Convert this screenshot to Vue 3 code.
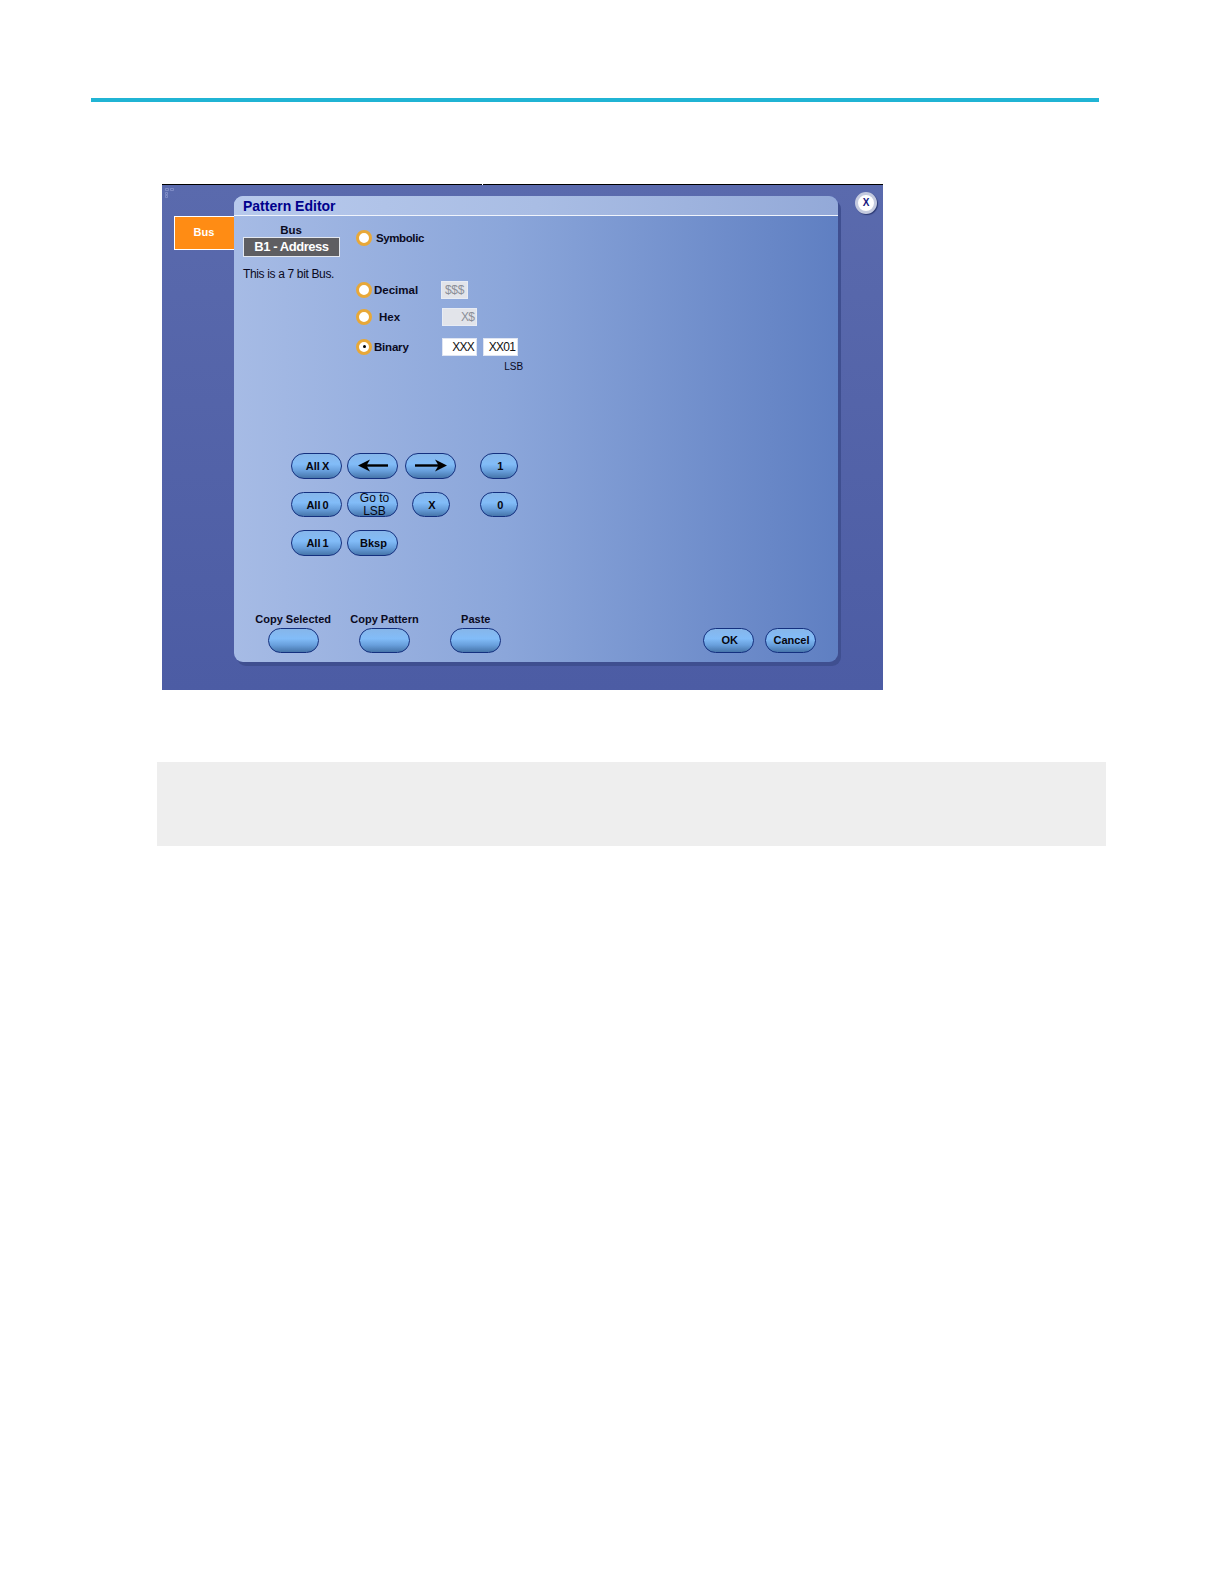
<script setup>
const keypad = [
  { label: 'All X' },
  { icon: 'left' },
  { icon: 'right' },
  { label: '1', narrow: true },
  { label: 'All 0' },
  { label: 'Go to LSB', tight: true },
  { label: 'X', narrow: true, inset: true },
  { label: '0', narrow: true },
  { label: 'All 1' },
  { label: 'Bksp' },
]
const clipboard = ['Copy Selected', 'Copy Pattern', 'Paste']
</script>

<template>
  <div class="page">
    <div class="rule"></div>

    <section class="shot">
      <i class="tick"></i>
      <svg class="grip" width="9" height="10" viewBox="0 0 9 10">
        <path d="M.5.5h3v2h-3zM5.5.5h3v2h-3zM.5 4.5h2v2h-2zM.5 7.5h2v2h-2z" fill="none" stroke="#8d9ad0" stroke-width=".7" />
      </svg>
      <div class="tab">Bus</div>

      <div class="dialog">
        <header class="title">Pattern Editor</header>
        <div class="body">
          <div class="top">
            <div class="bus">
              <div class="bus-label">Bus</div>
              <div class="bus-value">B1 - Address</div>
              <p class="bus-note">This is a 7 bit Bus.</p>
            </div>
            <div class="options">
              <div class="opt">
                <span class="radio"></span>
                <span class="opt-label l-symbolic">Symbolic</span>
              </div>
              <div class="opt decimal">
                <span class="radio"></span>
                <span class="opt-label l-decimal">Decimal</span>
                <span class="field off dec-field">$$$</span>
              </div>
              <div class="opt hex">
                <span class="radio"></span>
                <span class="opt-label l-hex">Hex</span>
                <span class="field off">X$</span>
              </div>
              <div class="opt binary">
                <span class="radio on"></span>
                <span class="opt-label l-binary">Binary</span>
                <span class="field">XXX</span>
                <span class="field">XX01</span>
              </div>
              <div class="lsb">LSB</div>
            </div>
          </div>

          <div class="keypad">
            <button
              v-for="(k, i) in keypad"
              :key="i"
              class="pill"
              :class="{ narrow: k.narrow, inset: k.inset, tight: k.tight, arrow: k.icon }"
            >
              <svg v-if="k.icon === 'left'" width="30" height="13" viewBox="0 0 30 13">
                <path d="M6 6.5H30" stroke="#000" stroke-width="2.4" />
                <path d="M0 6.5 12 .5 8.5 6.5 12 12.5z" fill="#000" />
              </svg>
              <svg v-else-if="k.icon === 'right'" width="32" height="13" viewBox="0 0 32 13">
                <path d="M0 6.5H26" stroke="#000" stroke-width="2.4" />
                <path d="M32 6.5 20 .5 23.5 6.5 20 12.5z" fill="#000" />
              </svg>
              <template v-else>{{ k.label }}</template>
            </button>
          </div>

          <div class="bottom">
            <div v-for="c in clipboard" :key="c" class="clip">
              <span class="clip-label">{{ c }}</span>
              <button class="pill"></button>
            </div>
            <div class="actions">
              <button class="pill">OK</button>
              <button class="pill">Cancel</button>
            </div>
          </div>
        </div>
      </div>

      <button class="close">X</button>
    </section>

    <div class="note"></div>
  </div>
</template>

<style>
html, body { margin: 0; background: #fff; }
</style>

<style scoped>
.page {
  width: 1224px;
  height: 1584px;
  background: #fff;
  overflow: hidden;
  font-family: "Liberation Sans", Arial, sans-serif;
  display: flow-root;
}
.rule {
  width: 1008px;
  height: 4px;
  margin: 98px 0 0 91px;
  background: #20b4d4;
}
.shot {
  position: relative;
  box-sizing: border-box;
  display: flex;
  align-items: flex-start;
  width: 721px;
  height: 506px;
  margin: 82px 0 0 162px;
  padding: 11px 0 0 12px;
  border-top: 1px solid #000;
  background: linear-gradient(180deg, #5a6aad 0%, #4c5ca4 100%);
}
.tick {
  position: absolute;
  left: 320px;
  top: -1px;
  width: 1px;
  height: 1px;
  background: #fff;
}
.grip {
  position: absolute;
  left: 3px;
  top: 3px;
}
.tab {
  box-sizing: border-box;
  width: 60px;
  height: 34px;
  margin-top: 20px;
  padding-right: 1px;
  border: 1px solid #fff;
  border-right: 0;
  background: #ff8c14;
  color: #fff;
  font-size: 11px;
  font-weight: 700;
  line-height: 30px;
  text-align: center;
}
.dialog {
  box-sizing: border-box;
  display: flex;
  flex-direction: column;
  width: 604px;
  height: 466px;
  border-radius: 9px;
  background: linear-gradient(90deg, #a6bbe5 0%, #8ba6da 45%, #5f7fc2 100%);
  box-shadow: 3px 4px 0 #3f4f90;
}
.title {
  box-sizing: border-box;
  height: 20px;
  padding-left: 9px;
  border-bottom: 1px solid #f0f4fc;
  border-radius: 9px 9px 0 0;
  background: linear-gradient(90deg, #b7c9ec 0%, #a9bde4 50%, #93a9d8 100%);
  color: #00008c;
  font-size: 14px;
  font-weight: 700;
  line-height: 20px;
}
.body {
  flex: 1;
  display: flex;
  flex-direction: column;
  padding: 7px 22px 9px 9px;
  color: #0a0a1e;
}
.top {
  display: flex;
}
.bus {
  flex: none;
  width: 113px;
}
.bus-label {
  width: 96px;
  height: 14px;
  font-size: 11.5px;
  font-weight: 700;
  line-height: 14px;
  text-align: center;
}
.bus-value {
  box-sizing: border-box;
  width: 97px;
  height: 20px;
  border: 1px solid #e4e8f0;
  background: #5e5e62;
  color: #fff;
  font-size: 13px;
  font-weight: 700;
  letter-spacing: -0.45px;
  line-height: 18px;
  text-align: center;
}
.bus-note {
  margin: 10px 0 0;
  font-size: 12px;
  line-height: 14px;
  letter-spacing: -0.35px;
}
.options {
  display: flex;
  flex-direction: column;
  padding-top: 6px;
}
.opt {
  display: flex;
  align-items: center;
  height: 18px;
}
.decimal { margin-top: 34px; }
.hex { margin-top: 9px; }
.binary { margin-top: 11.5px; }
.radio {
  position: relative;
  box-sizing: border-box;
  flex: none;
  width: 16px;
  height: 16px;
  border: 3px solid #e8a838;
  border-radius: 50%;
  background: #fff;
}
.radio.on::after {
  content: "";
  position: absolute;
  left: 3.5px;
  top: 3.5px;
  width: 3px;
  height: 3px;
  border-radius: 50%;
  background: #000;
}
.opt-label {
  font-size: 11.5px;
  font-weight: 700;
  line-height: 18px;
}
.l-symbolic { margin-left: 4px; letter-spacing: -0.4px; }
.l-decimal { margin-left: 2px; width: 67px; }
.l-hex { margin-left: 7px; width: 62.7px; }
.l-binary { margin-left: 2px; width: 67.7px; letter-spacing: -0.2px; }
.field {
  box-sizing: border-box;
  flex: none;
  width: 35.5px;
  height: 18px;
  padding-right: 2px;
  border: 1px solid #dfe5f2;
  background: #fff;
  color: #111;
  font-size: 12px;
  line-height: 16px;
  text-align: right;
  letter-spacing: -0.7px;
}
.field + .field { margin-left: 5.5px; }
.off {
  border-color: #e8ecf4;
  background: #e2e4ea;
  color: #8b8f98;
}
.dec-field {
  width: 27px;
  height: 18.5px;
  padding-right: 0;
  text-align: center;
  letter-spacing: -0.3px;
}
.lsb {
  align-self: flex-end;
  margin: 6px -5px 0 0;
  font-size: 10px;
  line-height: 10px;
}
.keypad {
  display: grid;
  grid-template-columns: 56px 58.3px 75px 38px;
  grid-auto-rows: 25px;
  row-gap: 13.7px;
  margin: 81.6px 0 0 48px;
}
.pill {
  box-sizing: border-box;
  display: flex;
  align-items: center;
  justify-content: center;
  width: 51px;
  height: 25.5px;
  padding: 0 0 0 2px;
  border: 1.25px solid #14307f;
  border-radius: 13px;
  background: linear-gradient(180deg, #86b6ea 0%, #82bcf8 42%, #689fdc 70%, #4675aa 100%);
  color: #06060f;
  font-family: inherit;
  font-size: 11px;
  font-weight: 700;
  line-height: 12px;
  word-spacing: -1px;
}
.pill.arrow { padding: 0; }
.narrow { width: 38px; }
.inset { margin-left: 6.7px; }
.pill.tight {
  padding: 0 6px 0 10px;
  font-size: 12px;
  font-weight: 400;
  line-height: 13px;
  word-spacing: 0;
}
.bottom {
  display: flex;
  margin-top: auto;
  padding-left: 24.7px;
}
.clip {
  display: flex;
  flex-direction: column;
  align-items: center;
  width: 51px;
  margin-right: 40.3px;
}
.clip-label {
  height: 15px;
  margin-top: -1px;
  padding-bottom: 1px;
  font-size: 11px;
  font-weight: 700;
  line-height: 15px;
  white-space: nowrap;
}
.actions {
  display: flex;
  gap: 10.7px;
  margin-left: auto;
  padding-top: 15px;
}
.close {
  position: absolute;
  left: 693px;
  top: 7px;
  box-sizing: border-box;
  width: 22px;
  height: 22px;
  padding: 0;
  border: 3px solid #c4cadf;
  border-radius: 50%;
  background: #fff;
  box-shadow: 1px 1px 1px #2c3a74;
  color: #16167e;
  font-family: inherit;
  font-size: 10px;
  font-weight: 700;
  line-height: 16px;
}
.note {
  width: 949px;
  height: 84px;
  margin: 72px 0 0 157px;
  background: #eee;
}
</style>
